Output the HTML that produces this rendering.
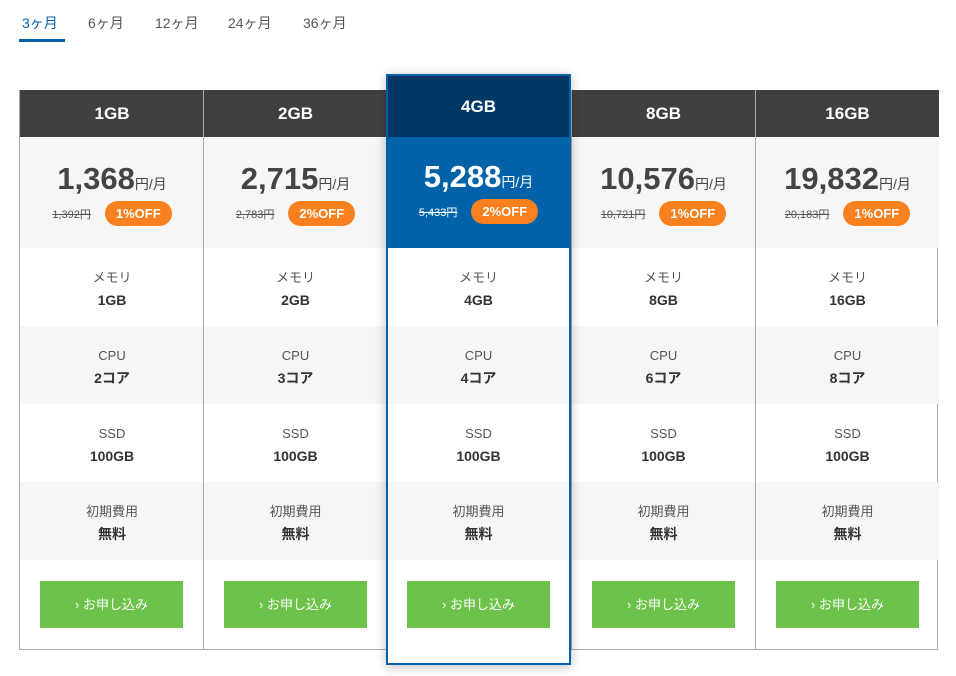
<!DOCTYPE html>
<html><head><meta charset="utf-8"><style>
*{box-sizing:border-box;margin:0;padding:0}
body{width:956px;height:676px;background:#fff;font-family:"Liberation Sans","Noto Sans CJK JP",sans-serif;color:#333;position:relative;overflow:hidden}
.tabs{position:absolute;top:13px;left:22px;font-size:14px;color:#555}
.tabs span{position:absolute;white-space:nowrap}
.ul{position:absolute;left:19px;top:39px;width:46px;height:3px;background:#0063a9}
.table{position:absolute;left:19px;top:90px;width:919px;height:560px;border:1px solid #aaa;border-top:none}
.col{position:absolute;top:0;width:184px;height:559px;border-left:1px solid #aaa}
.col:first-child{border-left:none}
.hd{height:47px;background:#404040;color:#fff;font-weight:bold;font-size:17px;text-align:center;line-height:47px}
.pr{height:111px;background:#f6f6f6;text-align:center;padding-top:24px}
.big{font-size:31px;font-weight:bold;color:#444}
.big small{font-size:14px;font-weight:normal}
.sub{margin-top:4px;display:flex;justify-content:center;align-items:center;gap:14px}
.old{font-size:11px;text-decoration:line-through;color:#555}
.off{background:#f8801e;color:#fff;font-weight:bold;font-size:13px;border-radius:13px;padding:0 11px;height:25px;line-height:25px}
.row{height:78px;text-align:center;padding-top:18px;font-size:13px;color:#555;line-height:23px}
.row b{display:block;color:#333;font-size:14px}
.g{background:#f6f6f6}
.btnrow{height:89px;position:relative}
.btn{position:absolute;left:20px;top:21px;width:143px;height:47px;background:#6cc24a;color:#fff;font-size:13px;text-align:center;line-height:47px}
.hl{position:absolute;left:386px;top:74px;width:185px;height:591px;border:2px solid #0063a9;background:#fff;box-shadow:0 2px 10px rgba(0,0,0,.25);z-index:2}
.hl .hd{height:61px;line-height:61px;background:#003865}
.hl .pr{background:#0063a9;padding-top:22px}
.hl .big,.hl .old{color:#fff}
.hl .btnrow{height:104px}
</style></head><body>
<div class="tabs"><span style="left:0;color:#0063a9">3ヶ月</span><span style="left:66px">6ヶ月</span><span style="left:133px">12ヶ月</span><span style="left:206px">24ヶ月</span><span style="left:281px">36ヶ月</span></div>
<div class="ul"></div>
<div class="table">
<div class="col" style="left:0"><div class="hd">1GB</div><div class="pr"><div class="big">1,368<small>円/月</small></div><div class="sub"><span class="old">1,392円</span><span class="off">1%OFF</span></div></div><div class="row">メモリ<b>1GB</b></div><div class="row g">CPU<b>2コア</b></div><div class="row">SSD<b>100GB</b></div><div class="row g">初期費用<b>無料</b></div><div class="btnrow"><div class="btn">› お申し込み</div></div></div>
<div class="col" style="left:183px"><div class="hd">2GB</div><div class="pr"><div class="big">2,715<small>円/月</small></div><div class="sub"><span class="old">2,783円</span><span class="off">2%OFF</span></div></div><div class="row">メモリ<b>2GB</b></div><div class="row g">CPU<b>3コア</b></div><div class="row">SSD<b>100GB</b></div><div class="row g">初期費用<b>無料</b></div><div class="btnrow"><div class="btn">› お申し込み</div></div></div>
<div class="col" style="left:551px"><div class="hd">8GB</div><div class="pr"><div class="big">10,576<small>円/月</small></div><div class="sub"><span class="old">10,721円</span><span class="off">1%OFF</span></div></div><div class="row">メモリ<b>8GB</b></div><div class="row g">CPU<b>6コア</b></div><div class="row">SSD<b>100GB</b></div><div class="row g">初期費用<b>無料</b></div><div class="btnrow"><div class="btn">› お申し込み</div></div></div>
<div class="col" style="left:735px"><div class="hd">16GB</div><div class="pr"><div class="big">19,832<small>円/月</small></div><div class="sub"><span class="old">20,183円</span><span class="off">1%OFF</span></div></div><div class="row">メモリ<b>16GB</b></div><div class="row g">CPU<b>8コア</b></div><div class="row">SSD<b>100GB</b></div><div class="row g">初期費用<b>無料</b></div><div class="btnrow"><div class="btn">› お申し込み</div></div></div>
</div>
<div class="hl"><div class="hd">4GB</div><div class="pr"><div class="big">5,288<small>円/月</small></div><div class="sub"><span class="old">5,433円</span><span class="off">2%OFF</span></div></div><div class="row">メモリ<b>4GB</b></div><div class="row g">CPU<b>4コア</b></div><div class="row">SSD<b>100GB</b></div><div class="row g">初期費用<b>無料</b></div><div class="btnrow"><div class="btn" style="left:19px">› お申し込み</div></div></div>
</body></html>
